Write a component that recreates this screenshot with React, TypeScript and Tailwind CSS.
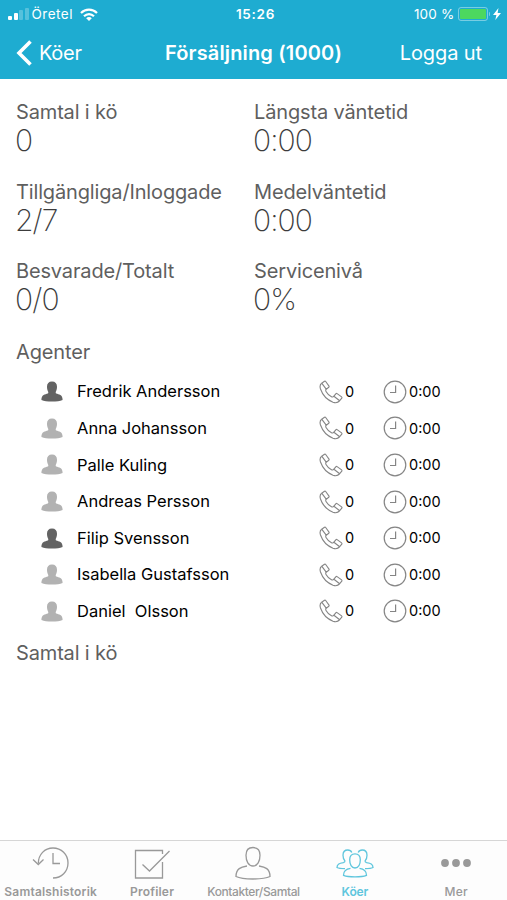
import clsx from "clsx";

interface Agent {
  name: string;
  active: boolean;
}

const agents: Agent[] = [
  { name: "Fredrik Andersson", active: true },
  { name: "Anna Johansson", active: false },
  { name: "Palle Kuling", active: false },
  { name: "Andreas Persson", active: false },
  { name: "Filip Svensson", active: true },
  { name: "Isabella Gustafsson", active: false },
  { name: "Daniel  Olsson", active: false },
];

const stats = [
  { label: "Samtal i kö", value: "0" },
  { label: "Längsta väntetid", value: "0:00" },
  { label: "Tillgängliga/Inloggade", value: "2/7" },
  { label: "Medelväntetid", value: "0:00" },
  { label: "Besvarade/Totalt", value: "0/0" },
  { label: "Servicenivå", value: "0%" },
];

function PersonIcon({ active }: { active: boolean }) {
  return (
    <svg viewBox="0 0 22 21" className={clsx("h-[21px] w-[22px]", active ? "text-[#636363]" : "text-[#b2b2b2]")} fill="currentColor">
      <path d="M11 .5c3.300 0 5 2 5 5.300 0 2-.5 3.800-1.200 5-.2 1-.1 1.500.4 1.700 1.300.6 2.900.7 4.200 1.500 1.500.9 2.200 2.600 2.200 4.900C19 20 15.500 20.500 11 20.500S3 20 .4 18.900c0-2.300.7-4 2.200-4.900 1.300-.8 2.900-.9 4.200-1.500.5-.2.600-.7.400-1.700C6.500 9.600 6 7.800 6 5.800 6 2.500 7.700.5 11 .5Z" />
    </svg>
  );
}

function PhoneIcon() {
  return (
    <svg viewBox="0 0 24 24" className="h-6 w-6 text-[#858585]" fill="none" stroke="currentColor" strokeWidth="1.100" strokeLinejoin="round">
      <path d="M2.700 3.200 5.500 1.300c.5-.3.900-.2 1.200.2l3.300 4.600c.3.500.2.900-.2 1.200L7.200 9.200Z" />
      <path d="M2.700 3.200C.8 4.500.700 6.500 1.500 9c2.100 6 6.500 10.800 12.500 13.200 2.800 1 5 .6 6.700-1.500" />
      <path d="M7.200 9.200c-.8.700-.7 1.300-.2 2.200 1.300 2.300 3 4 5.500 5.300 1 .5 1.700.4 2.400-.5" />
      <path d="m14.900 16.200 1.900-2.400c.4-.4.800-.5 1.300-.2l4.500 3.300c.5.400.5.800.2 1.300l-2.100 2.500Z" />
    </svg>
  );
}

function ClockIcon() {
  return (
    <svg viewBox="0 0 24 24" className="h-6 w-6 text-[#858585]" fill="none" stroke="currentColor" strokeWidth="1.200">
      <circle cx="12" cy="12" r="10.800" />
      <path d="M12.600 5.500v7H7" />
    </svg>
  );
}

function HistoryIcon() {
  return (
    <svg viewBox="0 0 38 34" className="h-[34px] w-[38px]" fill="none" stroke="currentColor" strokeWidth="1.300">
      <path d="M6.300 17.500C6.300 8.500 12.700 2 21 2s15 6.500 15 15-6.500 15-15 15" />
      <path d="m1 13.500 5.300 5L11.500 13.500M21 7v10.500h7" />
    </svg>
  );
}

function CheckIcon() {
  return (
    <svg viewBox="0 0 38 34" className="h-[34px] w-[38px]" fill="none" stroke="currentColor" strokeWidth="1.300">
      <path d="M29.500 8V4.500h-27V32h27V16" />
      <path d="m9.500 18.500 7 6.500L36.500 5" />
    </svg>
  );
}

function ContactIcon() {
  return (
    <svg viewBox="0 0 36 34" className="h-[34px] w-9" fill="none" stroke="currentColor" strokeWidth="1.300">
      <path d="M18 1.500c4.700 0 7 2.700 7 7.700 0 6-2.500 10.800-7 10.800s-7-4.800-7-10.800c0-5 2.300-7.700 7-7.700Z" />
      <path d="M12 20C6 21 1 22.500 1 30.500c4 2 10 2.500 17 2.500s13-.5 17-2.500c0-8-5-9.500-11-10.500" />
    </svg>
  );
}

function QueueIcon() {
  return (
    <svg viewBox="0 0 38 30" className="h-[30px] w-[38px]" fill="none" stroke="currentColor" strokeWidth="1.300">
      <path d="M19 5.800c3.700 0 5.300 2.200 5.300 6 0 4.700-1.900 8.200-5.300 8.200s-5.300-3.500-5.300-8.200c0-3.800 1.600-6 5.300-6Z" />
      <path d="M14.500 20.400C10 21 7.500 22.500 7.500 27.300c3 1.200 7 1.500 11.500 1.500s8.500-.3 11.500-1.500c0-4.800-2.500-6.300-7-6.900" />
      <path d="M15.800 4.500C15 2.700 13.700 2 11.800 2 8.500 2 7 4 7 7.200c0 2.300.6 4.200 1.900 5.700.2 1-.4 1.400-1.500 1.700C3.500 15.300 1 16 1 19.500c1.500.8 4 1.100 8 1.100" />
      <path d="M22.200 4.500C23 2.700 24.300 2 26.200 2 29.500 2 31 4 31 7.200c0 2.300-.6 4.200-1.900 5.700-.2 1 .4 1.400 1.500 1.700 3.900.7 6.400 1.400 6.400 4.900-1.500.8-4 1.100-8 1.100" />
    </svg>
  );
}

function MoreIcon() {
  return (
    <svg viewBox="0 0 30 8" className="h-2 w-[30px]" fill="currentColor">
      <circle cx="4" cy="4" r="3.900" />
      <circle cx="15" cy="4" r="3.900" />
      <circle cx="26" cy="4" r="3.900" />
    </svg>
  );
}

const tabs = [
  { label: "Samtalshistorik", icon: <HistoryIcon />, text: "font-semibold tracking-[0.2px]" },
  { label: "Profiler", icon: <CheckIcon />, text: "font-semibold tracking-[0.2px]" },
  { label: "Kontakter/Samtal", icon: <ContactIcon />, text: "font-medium tracking-[-0.4px]" },
  { label: "Köer", icon: <QueueIcon />, text: "font-semibold tracking-[-0.1px]", selected: true },
  { label: "Mer", icon: <MoreIcon />, text: "font-medium tracking-[0.3px]" },
];

function StatusBar() {
  return (
    <div className="grid h-7 grid-cols-3 items-center px-2 text-[13.500px]">
      <div className="flex items-center">
        <div className="flex h-3 items-end gap-[1.500px]">
          <i className="h-1 w-1 rounded-[1px] bg-white" />
          <i className="h-[7px] w-1 rounded-[1px] bg-white" />
          <i className="h-[10px] w-1 rounded-[1px] bg-white/25" />
          <i className="h-3 w-1 rounded-[1px] bg-white/25" />
        </div>
        <span className="ml-[3px] tracking-[0.500px]">Öretel</span>
        <svg viewBox="0 0 18 13" className="ml-[7px] h-[13px] w-[18px]" fill="none" stroke="currentColor" strokeWidth="2.200">
          <path d="M1 5c4.500-4.500 11.500-4.500 16 0M4 8.200c2.900-2.900 7.100-2.900 10 0" />
          <path d="M6.200 10.200c1.600-1.600 4-1.600 5.600 0L9 13Z" fill="currentColor" stroke="none" />
        </svg>
      </div>
      <span className="pl-1 text-center font-semibold tracking-[0.700px]">15:26</span>
      <div className="-mr-0.5 flex items-center justify-end">
        <span className="tracking-[0.2px] whitespace-nowrap">100 %</span>
        <div className="ml-[3px] h-[14px] w-[30px] rounded-[3px] border border-white/40 p-px">
          <div className="h-full rounded-[1px] bg-[#4cd85f]" />
        </div>
        <i className="ml-px h-1 w-[1.500px] rounded-r bg-white/40" />
        <svg viewBox="0 0 8 12" className="ml-[3px] h-3 w-2" fill="currentColor">
          <path d="M5.500 0 0 7h3.400L2.300 12 8 5H4.600Z" />
        </svg>
      </div>
    </div>
  );
}

export default function App() {
  return (
    <div className="flex h-[900px] w-[507px] flex-col overflow-hidden bg-white font-['Inter',sans-serif]">
      <header className="h-[79px] shrink-0 bg-[#1eacd1] text-white">
        <StatusBar />
        <nav className="grid h-[50px] grid-cols-[1fr_auto_1fr] items-center px-4 text-[20px]">
          <button className="flex items-center gap-[7px]">
            <svg viewBox="0 0 16 26" className="h-[26px] w-4" fill="none" stroke="currentColor" strokeWidth="3.600">
              <path d="M14.500 1.500 3 13l11.500 11.500" />
            </svg>
            <span className="tracking-[-0.3px]">Köer</span>
          </button>
          <h1 className="font-semibold tracking-[0.150px]">Försäljning (1000)</h1>
          <button className="pr-[9px] text-right tracking-[-0.100px]">Logga ut</button>
        </nav>
      </header>

      <main className="flex-1 px-4 pt-[21px] text-[#5f5f5f]">
        <div className="grid grid-cols-[238px_1fr]">
          {stats.map((s) => (
            <div key={s.label} className="h-[79.500px]">
              <p className="text-[20px] leading-6 tracking-[-0.150px]">{s.label}</p>
              <p className="-mt-px -ml-px text-[30px] leading-[34px] font-extralight tracking-[-0.900px] text-[#3c3c3c]">{s.value}</p>
            </div>
          ))}
        </div>

        <h2 className="mt-px text-[20px] leading-6 tracking-[-0.150px]">Agenter</h2>
        <ul className="mt-[10px] text-black">
          {agents.map((a) => (
            <li key={a.name} className="grid h-[36.600px] grid-cols-[36px_242px_64px_1fr] items-center pl-[25px]">
              <PersonIcon active={a.active} />
              <span className="text-[16.500px] whitespace-pre">{a.name}</span>
              <span className="flex items-center gap-[2px] text-[14.500px]">
                <PhoneIcon />0
              </span>
              <span className="flex items-center gap-[2px] text-[14.500px]">
                <ClockIcon />0:00
              </span>
            </li>
          ))}
        </ul>
        <h2 className="mt-[11px] text-[20px] leading-6 tracking-[-0.150px]">Samtal i kö</h2>
      </main>

      <footer className="grid h-[60px] shrink-0 grid-cols-5 border-t border-[#d6d6d6] bg-[#fdfdfd] text-[#999]">
        {tabs.map((t) => (
          <button key={t.label} className={clsx("flex flex-col items-center", t.selected && "text-[#5fc6dd]")}>
            <span className="mt-[5px] flex h-[34px] items-center">{t.icon}</span>
            <span className={clsx("mt-1 text-[12px] leading-4 whitespace-nowrap", t.text)}>{t.label}</span>
          </button>
        ))}
      </footer>
    </div>
  );
}
